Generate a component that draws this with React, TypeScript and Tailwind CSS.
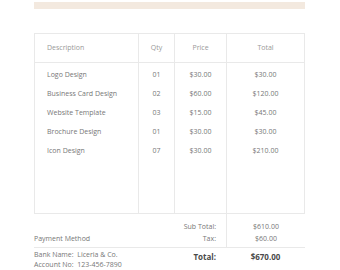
const items = [
  { desc: "Logo Design", qty: "01", price: "$30.00", total: "$30.00" },
  { desc: "Business Card Design", qty: "02", price: "$60.00", total: "$120.00" },
  { desc: "Website Template", qty: "03", price: "$15.00", total: "$45.00" },
  { desc: "Brochure Design", qty: "01", price: "$30.00", total: "$30.00" },
  { desc: "Icon Design", qty: "07", price: "$30.00", total: "$210.00" },
];

export default function App() {
  return (
    <div
      className="w-[340px] h-[270px] overflow-hidden bg-white text-[7px] text-[#777]"
      style={{ fontFamily: '"Open Sans", sans-serif' }}
    >
      <div className="ml-[34px] w-[271px] pt-[2px]">
        <div className="h-[7px] bg-[#f3e9df]" />

        {/* items table */}
        <div className="mt-[24px] flex border-t border-l border-b border-[#e9e9e9]">
          <div className="w-[104px] border-r border-[#e9e9e9] flex flex-col">
            <div className="h-[29px] border-b border-[#e9e9e9] flex items-center pl-[12px] text-[#999]">
              Description
            </div>
            <div className="h-[150px] pt-[3px]">
              {items.map((it) => (
                <div key={it.desc} className="h-[19px] flex items-center pl-[12px]">
                  {it.desc}
                </div>
              ))}
            </div>
          </div>
          <div className="w-[36px] border-r border-[#e9e9e9] flex flex-col">
            <div className="h-[29px] border-b border-[#e9e9e9] flex items-center justify-center text-[#999]">
              Qty
            </div>
            <div className="pt-[3px]">
              {items.map((it) => (
                <div key={it.desc} className="h-[19px] flex items-center justify-center">
                  {it.qty}
                </div>
              ))}
            </div>
          </div>
          <div className="w-[52px] border-r border-[#e9e9e9] flex flex-col">
            <div className="h-[29px] border-b border-[#e9e9e9] flex items-center justify-center text-[#999]">
              Price
            </div>
            <div className="pt-[3px]">
              {items.map((it) => (
                <div key={it.desc} className="h-[19px] flex items-center justify-center">
                  {it.price}
                </div>
              ))}
            </div>
          </div>
          <div className="flex-1 border-r border-[#e9e9e9] flex flex-col">
            <div className="h-[29px] border-b border-[#e9e9e9] flex items-center justify-center text-[#999]">
              Total
            </div>
            <div className="pt-[3px]">
              {items.map((it) => (
                <div key={it.desc} className="h-[19px] flex items-center justify-center">
                  {it.total}
                </div>
              ))}
            </div>
          </div>
        </div>

        {/* totals */}
        <div className="flex h-[34px] border-b border-[#e9e9e9]">
          <div className="w-[192px] flex items-end justify-between pb-[3px] pr-[10px]">
            <div>Payment Method</div>
            <div className="flex flex-col items-end gap-[1px] leading-[11px]">
              <div>Sub Total:</div>
              <div>Tax:</div>
            </div>
          </div>
          <div className="flex-1 border-l border-[#e9e9e9] flex flex-col items-center justify-end pb-[3px] gap-[1px] leading-[11px]">
            <div>$610.00</div>
            <div>$60.00</div>
          </div>
        </div>

        <div className="flex pt-[2px]">
          <div className="w-[192px] flex justify-between pr-[10px]">
            <div className="flex flex-col leading-[10px]">
              <div>Bank Name:&nbsp; Liceria &amp; Co.</div>
              <div>Account No:&nbsp; 123-456-7890</div>
            </div>
            <div className="text-[8px] font-bold text-[#4a4a4a] pt-[1px]">Total:</div>
          </div>
          <div className="flex-1 flex justify-center text-[8px] font-bold text-[#4a4a4a] pt-[1px]">
            $670.00
          </div>
        </div>
      </div>
    </div>
  );
}
